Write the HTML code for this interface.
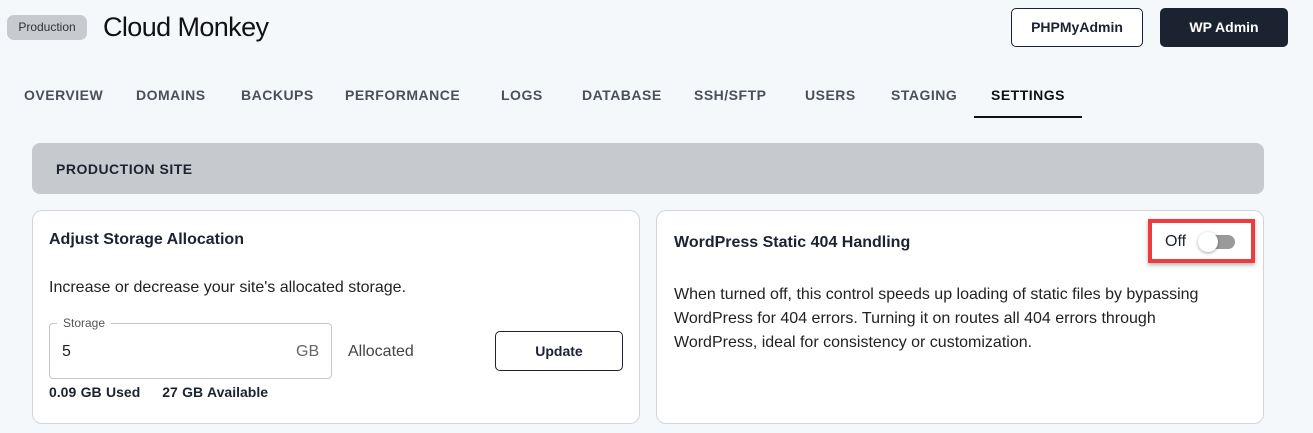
<!DOCTYPE html>
<html><head><style>
*{box-sizing:border-box;margin:0;padding:0}
body{width:1313px;height:433px;background:#f5f8fb;font-family:"Liberation Sans",sans-serif;color:#1b2230;position:relative;overflow:hidden}
.a{position:absolute;white-space:nowrap}
.tab{position:absolute;top:87px;font-size:14px;font-weight:bold;color:#4a505a;letter-spacing:.5px}
.card{position:absolute;background:#fff;border:1px solid #d2d5da;border-radius:10px}
</style></head><body>
<div class="a" style="left:7px;top:15px;width:80px;height:25px;background:#c7cace;border-radius:7px;font-size:12px;line-height:25px;text-align:center;color:#333">Production</div>
<div class="a" style="left:103px;top:12px;font-size:27px;letter-spacing:-.6px;color:#111">Cloud Monkey</div>
<div class="a" style="left:1011px;top:8px;width:132px;height:39px;border:1px solid #1b2230;border-radius:5px;background:#fff;font-size:14px;font-weight:bold;text-align:center;line-height:37px">PHPMyAdmin</div>
<div class="a" style="left:1160px;top:8px;width:128px;height:39px;background:#1b2330;border-radius:5px;color:#fff;font-size:14px;font-weight:bold;text-align:center;line-height:39px">WP Admin</div>
<div class="tab" style="left:24px">OVERVIEW</div>
<div class="tab" style="left:136px">DOMAINS</div>
<div class="tab" style="left:241px">BACKUPS</div>
<div class="tab" style="left:345px">PERFORMANCE</div>
<div class="tab" style="left:501px">LOGS</div>
<div class="tab" style="left:582px">DATABASE</div>
<div class="tab" style="left:694px">SSH/SFTP</div>
<div class="tab" style="left:805px">USERS</div>
<div class="tab" style="left:891px">STAGING</div>
<div class="tab" style="left:991px;color:#111">SETTINGS</div>
<div class="a" style="left:974px;top:116px;width:108px;height:2px;background:#111"></div>
<div class="a" style="left:32px;top:143px;width:1232px;height:51px;background:#c6c9cd;border-radius:8px"></div>
<div class="a" style="left:56px;top:161px;font-size:14px;font-weight:bold;letter-spacing:.5px">PRODUCTION SITE</div>
<div class="card" style="left:32px;top:210px;width:608px;height:214px"></div>
<div class="a" style="left:49px;top:231px;font-size:16px;font-weight:bold">Adjust Storage Allocation</div>
<div class="a" style="left:49px;top:279px;font-size:16px;color:#222">Increase or decrease your site's allocated storage.</div>
<div class="a" style="left:49px;top:323px;width:283px;height:56px;border:1px solid #c4c7cc;border-radius:4px"></div>
<div class="a" style="left:57px;top:316px;padding:0 6px;background:#fff;font-size:12px;color:#555">Storage</div>
<div class="a" style="left:62px;top:343px;font-size:16px">5</div>
<div class="a" style="left:296px;top:343px;font-size:16px;color:#666">GB</div>
<div class="a" style="left:348px;top:343px;font-size:16px;color:#444">Allocated</div>
<div class="a" style="left:495px;top:331px;width:128px;height:40px;border:1px solid #1b2230;border-radius:5px;font-size:14px;font-weight:bold;text-align:center;line-height:38px">Update</div>
<div class="a" style="left:49px;top:384px;font-size:14px;font-weight:bold;word-spacing:.5px">0.09 GB Used&nbsp;&nbsp;&nbsp;&nbsp;&nbsp;27 GB Available</div>
<div class="card" style="left:656px;top:210px;width:608px;height:214px"></div>
<div class="a" style="left:674px;top:234px;font-size:16px;font-weight:bold">WordPress Static 404 Handling</div>
<div class="a" style="left:1148px;top:219px;width:107px;height:44px;border:4px solid #ee3b3f;box-shadow:0 2px 4px rgba(0,0,0,.3)"></div>
<div class="a" style="left:1165px;top:233px;font-size:16px">Off</div>
<div class="a" style="left:1204px;top:235px;width:31px;height:14px;background:#9a9a9a;border-radius:7px"></div>
<div class="a" style="left:1198px;top:232px;width:20px;height:20px;background:#fff;border-radius:50%;box-shadow:0 1px 3px rgba(0,0,0,.35)"></div>
<div class="a" style="left:674px;top:283px;font-size:16px;line-height:24px;color:#222;white-space:normal;width:565px">When turned off, this control speeds up loading of static files by bypassing WordPress for 404 errors. Turning it on routes all 404 errors through WordPress, ideal for consistency or customization.</div>
</body></html>
